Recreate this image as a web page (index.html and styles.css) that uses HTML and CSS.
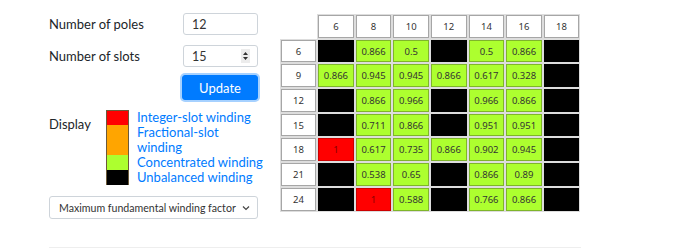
FILE: index.html
```html
<!DOCTYPE html>
<html lang="en">
<head>
    <meta charset="UTF-8">
    <meta name="viewport" content="width=device-width, initial-scale=1.0">
    <title>Winding factor table</title>
    <link rel="stylesheet" href="styles.css">
</head>
<body>
    <div class="container">
        <div class="main">
            <div class="controls">
                <div class="field">
                    <label for="poles">Number of poles</label>
                    <input type="text" id="poles" value="12">
                </div>
                <div class="field">
                    <label for="slots">Number of slots</label>
                    <div class="number">
                        <span>15</span>
                        <span class="spin">
                            <svg width="7" height="12" viewBox="0 0 7 12"><path d="M1 5 L3.5 2 L6 5 Z M1 7 L3.5 10 L6 7 Z" fill="#333"/></svg>
                        </span>
                    </div>
                </div>
                <div class="field">
                    <span></span>
                    <button class="btn">Update</button>
                </div>

                <div class="display">
                    <span class="display-label">Display</span>
                    <div class="legend">
                        <div class="legend-row"><span class="swatch red"></span><span class="legend-text">Integer-slot winding</span></div>
                        <div class="legend-row"><span class="swatch orange"></span><span class="legend-text">Fractional-slot<br>winding</span></div>
                        <div class="legend-row"><span class="swatch green"></span><span class="legend-text">Concentrated winding</span></div>
                        <div class="legend-row"><span class="swatch black"></span><span class="legend-text">Unbalanced winding</span></div>
                    </div>
                </div>

                <div class="select">
                    <span>Maximum fundamental winding factor</span>
                    <svg width="8" height="6" viewBox="0 0 8 6"><path d="M1 1.5 L4 4.5 L7 1.5" fill="none" stroke="#444" stroke-width="1.2"/></svg>
                </div>
            </div>

            <table class="grid">
                <tr>
                    <td class="corner"></td>
                    <td class="head">6</td><td class="head">8</td><td class="head">10</td><td class="head">12</td><td class="head">14</td><td class="head">16</td><td class="head">18</td>
                </tr>
                <tr>
                    <td class="head">6</td>
                    <td class="ub"></td><td class="cw">0.866</td><td class="cw">0.5</td><td class="ub"></td><td class="cw">0.5</td><td class="cw">0.866</td><td class="ub"></td>
                </tr>
                <tr>
                    <td class="head">9</td>
                    <td class="cw">0.866</td><td class="cw">0.945</td><td class="cw">0.945</td><td class="cw">0.866</td><td class="cw">0.617</td><td class="cw">0.328</td><td class="ub"></td>
                </tr>
                <tr>
                    <td class="head">12</td>
                    <td class="ub"></td><td class="cw">0.866</td><td class="cw">0.966</td><td class="ub"></td><td class="cw">0.966</td><td class="cw">0.866</td><td class="ub"></td>
                </tr>
                <tr>
                    <td class="head">15</td>
                    <td class="ub"></td><td class="cw">0.711</td><td class="cw">0.866</td><td class="ub"></td><td class="cw">0.951</td><td class="cw">0.951</td><td class="ub"></td>
                </tr>
                <tr>
                    <td class="head">18</td>
                    <td class="is">1</td><td class="cw">0.617</td><td class="cw">0.735</td><td class="cw">0.866</td><td class="cw">0.902</td><td class="cw">0.945</td><td class="ub"></td>
                </tr>
                <tr>
                    <td class="head">21</td>
                    <td class="ub"></td><td class="cw">0.538</td><td class="cw">0.65</td><td class="ub"></td><td class="cw">0.866</td><td class="cw">0.89</td><td class="ub"></td>
                </tr>
                <tr>
                    <td class="head">24</td>
                    <td class="ub"></td><td class="is">1</td><td class="cw">0.588</td><td class="ub"></td><td class="cw">0.766</td><td class="cw">0.866</td><td class="ub"></td>
                </tr>
            </table>
        </div>
        <hr>
    </div>
</body>
</html>
```

FILE: styles.css
```css
body {
    margin: 0;
    font-family: Lato, "Noto Sans", sans-serif;
    color: #212529;
    background: #fff;
}
.container {
    width: 532px;
    padding: 13px 0 0 49px;
}
.main {
    display: flex;
    gap: 23px;
    align-items: flex-start;
}
.controls {
    width: 209px;
    flex-shrink: 0;
}
.field {
    display: grid;
    grid-template-columns: 134px 75px;
    align-items: center;
    margin-bottom: 10px;
    font-size: 13px;
}
.field:nth-child(2) {
    margin-bottom: 8px;
}
.field input,
.number {
    box-sizing: border-box;
    height: 22px;
    width: 75px;
    border: 1px solid #ced4da;
    border-radius: 3px;
    padding: 0 8px;
    font: inherit;
    font-size: 12.5px;
    color: #333;
}
.number {
    display: flex;
    align-items: center;
    justify-content: space-between;
    padding-right: 7px;
}
.spin {
    display: flex;
    background: #ececec;
    padding: 1px 1px;
}
.btn {
    box-sizing: border-box;
    width: 76px;
    height: 25px;
    margin-left: -1px;
    background: #007bff;
    color: #fff;
    border: 1px solid #007bff;
    border-radius: 3px;
    font: inherit;
    font-size: 13px;
    box-shadow: 0 0 0 2px rgba(0, 123, 255, 0.35);
}
.display {
    display: flex;
    margin-top: 2px;
}
.display-label {
    width: 57px;
    flex-shrink: 0;
    font-size: 13px;
    padding-top: 6px;
}
.legend {
    display: flex;
    flex-direction: column;
}
.legend-row {
    display: flex;
    align-items: stretch;
}
.swatch {
    box-sizing: border-box;
    width: 23px;
    flex-shrink: 0;
    border-left: 1px solid #6b5a3a;
    border-right: 1px solid #6b5a3a;
}
.legend-row:first-child .swatch {
    border-top: 1px solid #6b5a3a;
}
.red { background: #ff0000; }
.orange { background: #ffa500; }
.green { background: #adff2f; }
.black { background: #000; }
.legend-text {
    padding-left: 8px;
    color: #007bff;
    font-size: 13px;
    line-height: 15px;
    white-space: nowrap;
}
.select {
    box-sizing: border-box;
    margin-top: 11px;
    height: 23px;
    border: 1px solid #ced4da;
    border-radius: 3px;
    display: flex;
    align-items: center;
    justify-content: space-between;
    padding: 0 7px 0 9px;
    font-size: 10.6px;
    color: #333;
    white-space: nowrap;
}
.grid {
    margin-top: 0;
    border-collapse: separate;
    border-spacing: 2px;
    margin-left: -2px;
    font-family: "Noto Sans", sans-serif;
    font-size: 9.5px;
    color: #333;
}
.grid td {
    box-sizing: border-box;
    width: 36px;
    height: 22.7px;
    padding: 0;
    text-align: center;
    box-shadow: 0 0 0 1px #ddd;
}
.grid td.corner {
    box-shadow: none;
}
.head {
    background: #fff;
    border: 1px solid #a6a6a6;
}
.cw {
    background: #adff2f;
    border: 1px solid #7fb52a;
}
.ub {
    background: #000;
    border: 1px solid #000;
}
.is {
    background: #ff0000;
    border: 1px solid #c00;
    color: #800;
}
hr {
    margin: 28px 0 0;
    border: 0;
    border-top: 1px solid #eee;
}
```
